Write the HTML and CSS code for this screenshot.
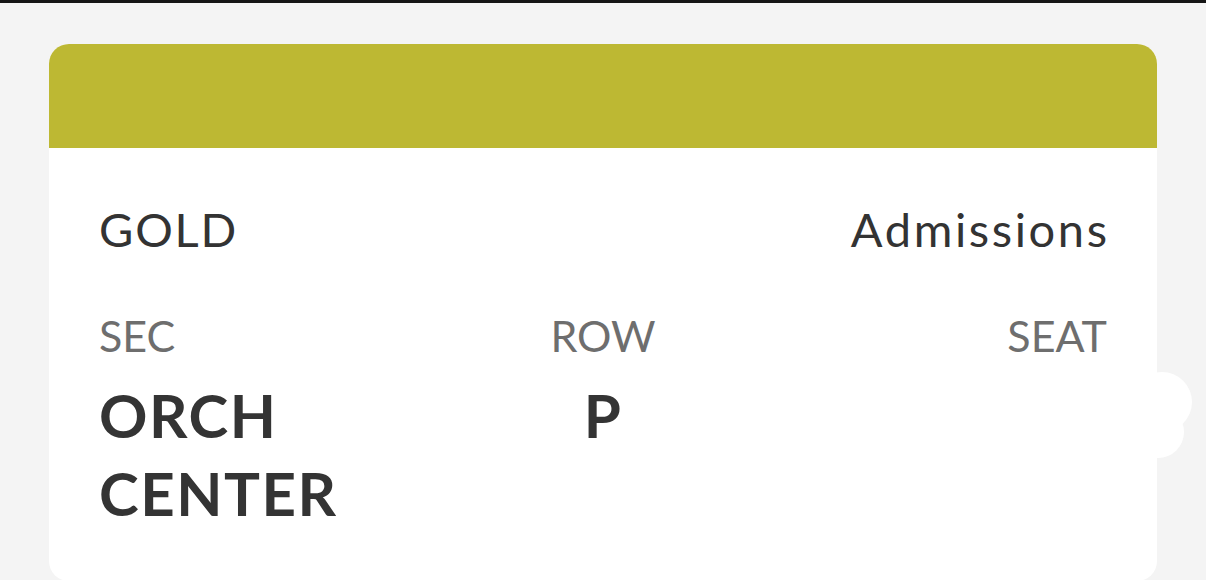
FILE: index.html
```html
<!DOCTYPE html>
<html lang="en">
<head>
  <meta charset="UTF-8">
  <meta name="viewport" content="width=device-width, initial-scale=1.0">
  <title>Ticket</title>
  <link rel="stylesheet" href="styles.css">
</head>
<body>
  <div class="page">
    <div class="ticket">
      <div class="ticket-header"></div>
      <div class="ticket-body">
        <div class="ticket-top">
          <span class="tier">GOLD</span>
          <span class="event">Admissions</span>
        </div>
        <div class="seat-grid">
          <div class="seat-col">
            <div class="seat-label">SEC</div>
            <div class="seat-value">ORCH CENTER</div>
          </div>
          <div class="seat-col center">
            <div class="seat-label">ROW</div>
            <div class="seat-value">P</div>
          </div>
          <div class="seat-col right">
            <div class="seat-label">SEAT</div>
            <div class="seat-value"></div>
          </div>
        </div>
      </div>
    </div>
    <!-- bit of the next card peeking out on the right -->
    <div class="peek">
      <span class="peek-a"></span>
      <span class="peek-b"></span>
    </div>
  </div>
</body>
</html>
```

FILE: styles.css
```css
html, body {
  margin: 0;
  padding: 0;
}
body {
  font-family: 'Lato', 'Open Sans', sans-serif;
  background-color: #f4f4f4;
  color: #333;
  border-top: 3px solid #151515;
  overflow: hidden;
  height: 577px;
}
.page {
  position: relative;
  padding: 41px 49px 0;
}
.ticket {
  width: 1108px;
  height: 537px;
  border-radius: 20px;
  overflow: hidden;
  background-color: #fff;
  display: flex;
  flex-direction: column;
}
.ticket-header {
  height: 104px;
  background-color: #bdb833;
  flex-shrink: 0;
}
.ticket-body {
  padding: 53px 50px 0;
}
.ticket-top {
  display: flex;
  justify-content: space-between;
  font-size: 47px;
  line-height: 56px;
  color: #333;
}
.tier {
  letter-spacing: 1.8px;
}
.event {
  letter-spacing: 2.6px;
  margin-right: -2.6px;
}
.seat-grid {
  display: grid;
  grid-template-columns: 1fr 1fr 1fr;
  margin-top: 53px;
}
.seat-col.center {
  text-align: center;
}
.seat-col.right {
  text-align: right;
}
.seat-label {
  font-size: 43px;
  line-height: 52px;
  color: #6e6e6e;
}
.seat-value {
  margin-top: 14px;
  font-size: 60px;
  line-height: 78px;
  font-weight: 700;
  color: #343434;
  letter-spacing: 1.5px;
}
.peek {
  position: absolute;
  left: 1128px;
  top: 369px;
  width: 70px;
  height: 90px;
}
.peek span {
  position: absolute;
  background-color: #fff;
  border-radius: 50%;
}
.peek-a {
  left: 4px;
  top: 0;
  width: 60px;
  height: 60px;
}
.peek-b {
  left: 4px;
  top: 34px;
  width: 52px;
  height: 52px;
}
```
